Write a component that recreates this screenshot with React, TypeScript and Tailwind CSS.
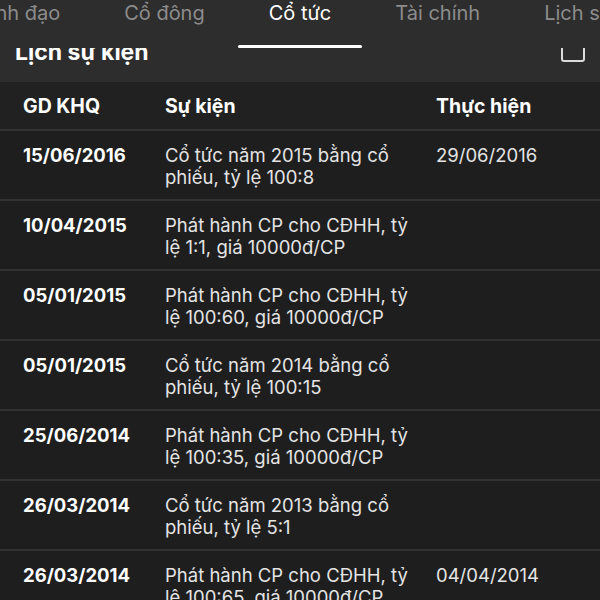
import React from "react";

type Row = { date: string; lines: string[]; done?: string };

const rows: Row[] = [
  { date: "15/06/2016", lines: ["Cổ tức năm 2015 bằng cổ", "phiếu, tỷ lệ 100:8"], done: "29/06/2016" },
  { date: "10/04/2015", lines: ["Phát hành CP cho CĐHH, tỷ", "lệ 1:1, giá 10000đ/CP"] },
  { date: "05/01/2015", lines: ["Phát hành CP cho CĐHH, tỷ", "lệ 100:60, giá 10000đ/CP"] },
  { date: "05/01/2015", lines: ["Cổ tức năm 2014 bằng cổ", "phiếu, tỷ lệ 100:15"] },
  { date: "25/06/2014", lines: ["Phát hành CP cho CĐHH, tỷ", "lệ 100:35, giá 10000đ/CP"] },
  { date: "26/03/2014", lines: ["Cổ tức năm 2013 bằng cổ", "phiếu, tỷ lệ 5:1"] },
  { date: "26/03/2014", lines: ["Phát hành CP cho CĐHH, tỷ", "lệ 100:65, giá 10000đ/CP"], done: "04/04/2014" },
];

function Tab({ label, active }: { label: string; active?: boolean }) {
  return (
    <div
      className={`relative shrink-0 h-[48px] px-[32px] pt-[3px] whitespace-nowrap text-[20px] leading-[20px] ${
        active ? "text-white" : "text-[#8c8c8c]"
      }`}
    >
      {label}
      {active && <div className="absolute left-[1px] right-[1px] top-[45px] h-[3px] rounded-full bg-white" />}
    </div>
  );
}

export default function App() {
  return (
    <div
      className="w-[600px] h-[600px] overflow-hidden bg-[#1e1e1e] text-white"
      style={{ fontFamily: "Inter, 'Noto Sans', sans-serif" }}
    >
      {/* top bar */}
      <div className="bg-[#2d2d2d] h-[82px] overflow-hidden">
        <div className="h-[48px] overflow-hidden grid grid-cols-[1fr_auto_1fr]">
          <div className="flex justify-end overflow-hidden">
            <Tab label="Lãnh đạo" />
            <Tab label="Cổ đông" />
          </div>
          <Tab label="Cổ tức" active />
          <div className="flex justify-start overflow-hidden">
            <Tab label="Tài chính" />
            <Tab label="Lịch sử" />
          </div>
        </div>
        <div className="h-[34px] overflow-hidden flex justify-between items-start pl-[15px] pr-[15px]">
          <div className="mt-[-7px] text-[23px] leading-[23px] font-bold text-white whitespace-nowrap">Lịch sự kiện</div>
          <div className="mt-[-10px] w-[24px] h-[24px] border-2 border-[#dcdcdc] rounded-[3px]" />
        </div>
      </div>

      {/* header */}
      <div className="h-[47px] bg-[#212121] flex items-start pt-[13px] text-[19.5px] leading-[22px] font-bold text-white">
        <div className="w-[165px] pl-[23px] shrink-0">GD KHQ</div>
        <div className="w-[271px] shrink-0">Sự kiện</div>
        <div className="flex-1">Thực hiện</div>
      </div>

      {/* rows */}
      {rows.map((r, i) => (
        <div
          key={i}
          className="border-t-2 border-[#323232] h-[70px] bg-[#1e1e1e] flex items-start pt-[13px] text-[18.5px] leading-[22px]"
        >
          <div className="w-[165px] pl-[23px] shrink-0 font-bold text-white">{r.date}</div>
          <div className="w-[271px] shrink-0 text-[#e4e4e4]">
            {r.lines.map((l, j) => (
              <div key={j} className="whitespace-nowrap">
                {l}
              </div>
            ))}
          </div>
          <div className="flex-1 text-[#e4e4e4]">{r.done}</div>
        </div>
      ))}
    </div>
  );
}
